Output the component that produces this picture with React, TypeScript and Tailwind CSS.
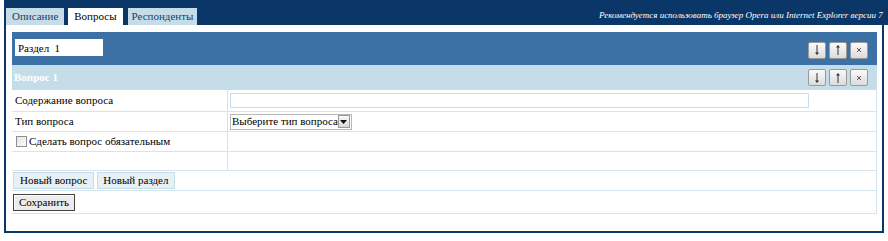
import React from 'react';

const navy = 'bg-[#0a3768]';

function ArrowBtn({ kind }: { kind: 'down' | 'up' | 'x' }) {
  return (
    <button className="w-[18px] h-[17px] flex items-center justify-center border border-[#9a9a9a] rounded-[2px] bg-gradient-to-b from-[#fafafa] to-[#dcdcdc]">
      <svg width="10" height="12" viewBox="0 0 10 12">
        {kind === 'down' && (
          <g stroke="#333" strokeWidth="1" fill="#333">
            <line x1="5" y1="1" x2="5" y2="10" />
            <path d="M3 8.5 L5 11 L7 8.5 Z" stroke="none" />
          </g>
        )}
        {kind === 'up' && (
          <g stroke="#333" strokeWidth="1" fill="#333">
            <line x1="5" y1="2" x2="5" y2="11" />
            <path d="M3 3.5 L5 1 L7 3.5 Z" stroke="none" />
          </g>
        )}
        {kind === 'x' && (
          <g stroke="#555" strokeWidth="1">
            <line x1="3" y1="4" x2="7" y2="8" />
            <line x1="7" y1="4" x2="3" y2="8" />
          </g>
        )}
      </svg>
    </button>
  );
}

function MoveButtons() {
  return (
    <div className="flex gap-[3px]">
      <ArrowBtn kind="down" />
      <ArrowBtn kind="up" />
      <ArrowBtn kind="x" />
    </div>
  );
}

function Row({ label, children, h }: { label?: React.ReactNode; children?: React.ReactNode; h: string }) {
  return (
    <div className={`flex border-b border-[#d3e6ef] ${h}`}>
      <div className="w-[216px] border-r border-[#d3e6ef] flex items-center pl-[3px]">{label}</div>
      <div className="flex-1 flex items-center pl-[2px]">{children}</div>
    </div>
  );
}

export default function App() {
  return (
    <div className="w-[888px] h-[241px] bg-white text-[11px] leading-[13px] text-black [font-family:'Liberation_Serif',serif] overflow-hidden">
      <div className={`h-[25px] ${navy} flex items-end pl-[2px] w-[884px] ml-[4px]`}>
        <div className="w-[593px] shrink-0 flex items-end gap-[4px] h-[17px]">
          <div className="h-[17px] px-[6px] bg-[#c4dde9] text-[#1b3e66] flex items-center">Описание</div>
          <div className="h-[17px] px-[6px] bg-white flex items-center">Вопросы</div>
          <div className="h-[17px] px-[4px] ml-[1px] bg-[#c4dde9] text-[#1b3e66] flex items-center">Респонденты</div>
        </div>
        <span className="shrink-0 whitespace-nowrap italic text-white text-[9px] leading-none mb-[5px]">
          Рекомендуется использовать браузер Opera или Internet Explorer версии 7
        </span>
      </div>
      <div className="ml-[4px] w-[880px] h-[208px] border-x-2 border-b-2 border-[#0a3768] pt-[7px] pl-[6px] pr-[5px]">
        <div className="h-[33px] bg-[#3b71a5] flex items-center justify-between pl-[3px] pr-[9px]">
          <input
            defaultValue="Раздел  1"
            className="w-[88px] h-[17px] bg-white px-[3px] text-[11px] outline-none mb-[2px]"
          />
          <div className="mt-[3px]">
            <MoveButtons />
          </div>
        </div>
        <div className="h-[25px] bg-[#c5dde8] flex items-center justify-between pl-[2px] pr-[9px]">
          <span className="text-white font-bold">Вопрос 1</span>
          <MoveButtons />
        </div>
        <div className="border-r border-[#d3e6ef]">
          <Row h="h-[22px]" label="Содержание вопроса">
            <input className="w-[579px] h-[15px] border border-[#c8dfea] outline-none" />
          </Row>
          <Row h="h-[20px]" label="Тип вопроса">
            <div className="h-[16px] w-[122px] border border-[#b8b8b8] flex items-center justify-between pl-[1px] pr-[1px] whitespace-nowrap">
              <span>Выберите тип вопроса</span>
              <span className="w-[14px] h-[13px] border border-[#999] bg-gradient-to-b from-[#fafafa] to-[#dadada] flex items-center justify-center">
                <svg width="7" height="4" viewBox="0 0 7 4">
                  <path d="M0 0 H7 L3.5 4 Z" fill="#111" />
                </svg>
              </span>
            </div>
          </Row>
          <Row
            h="h-[20px]"
            label={
              <span className="flex items-center gap-[2px] pl-[1px]">
                <span className="w-[11px] h-[11px] border border-[#8f8f8f] bg-gradient-to-br from-[#e6e6e6] to-[#fbfbfb]" />
                Сделать вопрос обязательным
              </span>
            }
          />
          <Row h="h-[19px]" />
          <div className="h-[20px] border-b border-[#d3e6ef] flex items-center gap-[3px] pl-[1px]">
            <button className="h-[17px] px-[6px] bg-[#e6f0f5] border border-[#c5dde9]">Новый вопрос</button>
            <button className="h-[17px] px-[5px] bg-[#e6f0f5] border border-[#c5dde9]">Новый раздел</button>
          </div>
          <div className="h-[23px] border-b border-[#d3e6ef] flex items-center pl-[1px]">
            <button className="h-[17px] px-[5px] bg-[#ececec] border border-[#444] shadow-[inset_1px_1px_0_#fff]">
              Сохранить
            </button>
          </div>
        </div>
      </div>
    </div>
  );
}
